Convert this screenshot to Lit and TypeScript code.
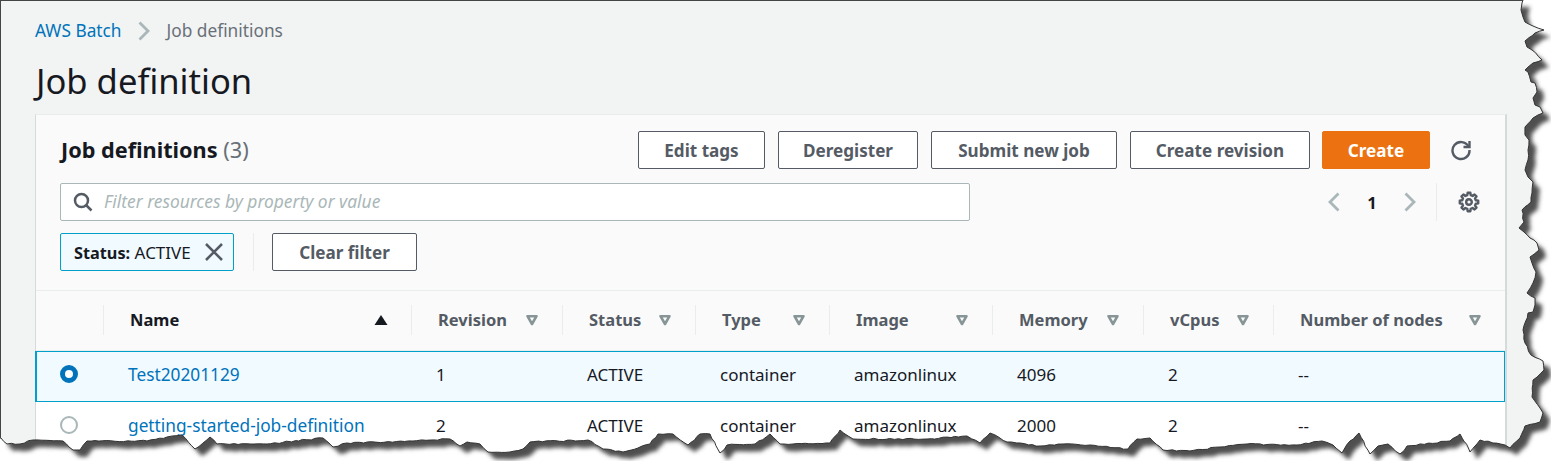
import { LitElement, html, css, svg } from "lit";
import { customElement } from "lit/decorators.js";

const rightEdge: number[][] = [[1523,0],[1522,3],[1521,10],[1523,17],[1525,22],[1533,26],[1544,30],[1535,33],[1525,41],[1527,47],[1532,50],[1542,60],[1533,63],[1525,70],[1528,72],[1531,82],[1535,83],[1537,92],[1533,98],[1535,105],[1540,107],[1543,113],[1533,118],[1525,127],[1525,135],[1529,140],[1528,150],[1528,160],[1525,170],[1528,177],[1533,182],[1532,193],[1531,202],[1522,210],[1524,222],[1519,228],[1524,232],[1530,238],[1537,243],[1539,250],[1530,257],[1532,263],[1536,272],[1533,283],[1527,293],[1535,298],[1535,305],[1533,312],[1528,313],[1523,330],[1525,343],[1531,355],[1543,361],[1544,370],[1533,380],[1532,397],[1540,408],[1543,413],[1540,422],[1525,426],[1520,438],[1510,448]];
const bottomEdge: number[][] = [[1505,445],[1480,440],[1470,452],[1460,434],[1450,441],[1407,446],[1400,454],[1388,444],[1378,446],[1370,454],[1359,433],[1350,441],[1342,453],[1333,445],[1322,441],[1297,445],[1247,444],[1220,447],[1190,451],[1163,450],[1150,438],[1137,439],[1128,449],[1090,445],[1063,444],[1040,446],[1020,443],[1007,442],[990,433],[980,443],[967,436],[927,439],[853,439],[840,430],[830,443],[793,444],[780,444],[770,434],[755,444],[727,445],[720,453],[710,434],[700,434],[688,445],[673,434],[658,434],[650,444],[623,452],[603,449],[588,440],[530,442],[523,449],[510,452],[488,452],[480,444],[467,442],[460,446],[450,439],[413,441],[347,443],[333,447],[323,438],[267,444],[217,444],[210,437],[195,449],[182,435],[167,437],[147,441],[87,441],[80,450],[73,450],[63,441],[33,440],[20,444],[7,444],[1,438]];

// Break the long straight runs of the tear into a small deterministic wobble.
function roughen(points: number[][]) {
  const out: string[] = [];
  let seed = 7;
  const noise = () => {
    seed = (seed * 16807) % 2147483647;
    return (seed % 1000) / 1000 - 0.5;
  };
  points.forEach((p, i) => {
    out.push(`${p[0]} ${p[1]}`);
    const q = points[i + 1];
    if (!q) return;
    const len = Math.hypot(q[0] - p[0], q[1] - p[1]);
    const steps = Math.floor(len / 4);
    for (let s = 1; s < steps; s++) {
      const t = s / steps;
      const x = p[0] + (q[0] - p[0]) * t + noise() * 1.4;
      const y = p[1] + (q[1] - p[1]) * t + noise() * 1.4;
      out.push(`${x.toFixed(1)} ${y.toFixed(1)}`);
    }
  });
  return out;
}
const edgePts = roughen([...rightEdge, ...bottomEdge]);
const edgeD = "M" + edgePts.join("L");
const outsideD = edgeD + "L0 438L0 461L1551 461L1551 0Z";
const pageD = edgeD + "L0 0Z";

function gearPath(cx: number, cy: number, ro: number, ri: number, teeth: number) {
  const pts: string[] = [];
  for (let i = 0; i < teeth; i++) {
    const a = (i / teeth) * Math.PI * 2 - Math.PI / 2;
    const s = Math.PI / teeth;
    const list: [number, number][] = [
      [ri, a - s * 0.62],
      [ro, a - s * 0.38],
      [ro, a + s * 0.38],
      [ri, a + s * 0.62],
    ];
    for (const [r, t] of list) {
      pts.push(`${(cx + r * Math.cos(t)).toFixed(2)} ${(cy + r * Math.sin(t)).toFixed(2)}`);
    }
  }
  return "M" + pts.join("L") + "Z";
}

const chevron = (dir: "l" | "r") => html`<svg class="chev" width="14" height="20" viewBox="0 0 14 20" fill="none" stroke="#aab7b8" stroke-width="2.800"><path d=${dir === "r" ? "M2.500 1.500l8.500 8.500-8.500 8.500" : "M11.500 1.500L3 10l8.500 8.500"}></path></svg>`;

const caret = html`<svg class="caret" width="14" height="12" viewBox="0 0 14 12" fill="none" stroke="#879596" stroke-width="2.600" stroke-linejoin="round"><path d="M2.500 2.200h9L7 10z"></path></svg>`;
const sortUp = html`<svg class="caret" width="14" height="12" viewBox="0 0 14 12"><path d="M7 1l6.500 10H.5z" fill="#16191f"></path></svg>`;

const columns = ["Name", "Revision", "Status", "Type", "Image", "Memory", "vCpus", "Number of nodes"];
const rows = [
  { selected: true, cells: ["Test20201129", "1", "ACTIVE", "container", "amazonlinux", "4096", "2", "--"] },
  { selected: false, cells: ["getting-started-job-definition", "2", "ACTIVE", "container", "amazonlinux", "2000", "2", "--"] },
];

@customElement("app-root")
export class AppRoot extends LitElement {
  static styles = css`
    :host {
      display: block;
      position: relative;
      width: 1551px;
      height: 461px;
      overflow: hidden;
      background: #f2f3f3;
      font-family: "Noto Sans", "Open Sans", sans-serif;
      font-size: 17px;
      color: #16191f;
    }
    * { box-sizing: border-box; }
    .page {
      display: flex;
      flex-direction: column;
      padding: 20px 44px 0 35px;
    }
    .crumbs {
      display: flex;
      align-items: center;
      height: 22px;
      font-size: 17.300px;
      color: #687078;
    }
    .crumbs span, .crumbs a { position: relative; top: -1px; }
    .crumbs a { color: #0073bb; }
    .crumbs .chev { margin: 0 16px 0 15px; }
    h1 {
      margin: 16px 0 10px;
      height: 46px;
      line-height: 46px;
      padding-left: 1px;
      font-size: 34.600px;
      font-weight: 400;
    }
    .panel {
      width: 1472px;
      background: #fafafa;
      border: 1px solid #d5dbdb;
      border-top-color: #eaeded;
      border-right-width: 2px;
    }
    .tools {
      display: flex;
      flex-direction: column;
      padding: 16px 24px 19px;
      border-bottom: 1px solid #eaeded;
    }
    .bar { display: flex; align-items: center; height: 38px; }
    .bar.search { margin-top: 14px; }
    .bar.filter { margin-top: 12px; }
    h2 {
      margin: 0;
      flex: 1;
      padding: 0 0 2px 1px;
      font-size: 21.700px;
      font-weight: 700;
    }
    h2 span { font-weight: 400; color: #687078; }
    .btn {
      display: flex;
      align-items: center;
      justify-content: center;
      height: 38px;
      border: 1px solid #545b64;
      border-radius: 2px;
      background: #fff;
      color: #545b64;
      font-size: 17.100px;
      font-weight: 700;
      margin-left: 13px;
    }
    .btn.w1 { width: 127px; margin-left: 0; }
    .btn.w2 { width: 140px; }
    .btn.w3 { width: 186px; }
    .btn.w4 { width: 180px; }
    .btn.primary {
      width: 108px;
      margin-left: 12px;
      background: #ec7211;
      border-color: #ec7211;
      color: #fff;
    }
    .refresh { margin: 0 9px 0 20px; }
    .input {
      display: flex;
      align-items: center;
      width: 910px;
      height: 38px;
      border: 1px solid #aab7b8;
      border-radius: 2px;
      background: #fff;
      padding: 0 0 2px 12px;
      font-size: 17.400px;
      font-style: italic;
      color: #aab7b8;
    }
    .input svg { margin: 2px 11px 0 0; flex: none; }
    .pager {
      display: flex;
      align-items: center;
      margin-left: auto;
      height: 38px;
    }
    .pager .num { width: 62px; text-align: center; font-weight: 700; font-size: 16.500px; }
    .pager .rule { width: 1px; height: 38px; background: #eaeded; margin: 0 21px 0 19px; }
    .pager .gear { margin-right: 1px; }
    .chip {
      display: flex;
      align-items: center;
      justify-content: space-between;
      width: 174px;
      height: 38px;
      border: 1px solid #00a1c9;
      border-radius: 2px;
      background: #f1faff;
      padding: 0 9px 0 13px;
      white-space: pre;
    }
    .chip b { font-weight: 700; font-size: 16.300px; }
    .chip svg { flex: none; }
    .vrule { width: 1px; height: 38px; background: #eaeded; margin: 0 18px 0 19px; }
    .btn.clear { width: 145px; margin-left: 0; }

    .row {
      display: grid;
      grid-template-columns: 67px 308px 151px 133px 134px 163px 151px 130px 1fr;
    }
    .head {
      height: 60px;
      padding-bottom: 2px;
      align-items: center;
      border-bottom: 1px solid #eaeded;
    }
    .th {
      display: flex;
      align-items: center;
      justify-content: space-between;
      height: 30px;
      padding: 0 23px 0 26px;
      font-weight: 700;
      font-size: 16.500px;
      color: #545b64;
      white-space: nowrap;
    }
    .th.rule { border-left: 1px solid #eaeded; }
    .th.sorted { color: #16191f; }
    .body { background: #fff; }
    .tr { height: 51px; padding-bottom: 5px; align-items: center; }
    .tr.selected {
      background: #f1faff;
      box-shadow: inset 0 0 0 1px #00a1c9, -1px 0 0 #00a1c9;
    }
    .td { padding-left: 25px; white-space: nowrap; }
    .td a { color: #0073bb; font-size: 17.300px; }
    .radio {
      display: block;
      width: 18px;
      height: 18px;
      margin: 0 0 0 24px;
      border-radius: 50%;
      border: 2px solid #aab7b8;
      background: #fff;
    }
    .radio.on { border: 5px solid #0073bb; }
    .tear { position: absolute; inset: 0; pointer-events: none; }
  `;

  render() {
    return html`
      <div class="page">
        <nav class="crumbs"><a>AWS Batch</a>${chevron("r")}<span>Job definitions</span></nav>
        <h1>Job definition</h1>
        <section class="panel">
          <div class="tools">
            <div class="bar">
              <h2>Job definitions <span>(3)</span></h2>
              <div class="btn w1">Edit tags</div>
              <div class="btn w2">Deregister</div>
              <div class="btn w3">Submit new job</div>
              <div class="btn w4">Create revision</div>
              <div class="btn primary">Create</div>
              <svg class="refresh" width="22" height="22" viewBox="0 0 22 22" fill="none" stroke="#545b64" stroke-width="2.400">
                <path d="M18.500 7.500A8.500 8.500 0 1 0 19.500 11"></path>
                <path d="M19.500 2v6h-6" stroke-linejoin="miter"></path>
              </svg>
            </div>
            <div class="bar search">
              <div class="input">
                <svg width="20" height="20" viewBox="0 0 20 20" fill="none" stroke="#545b64" stroke-width="2.500">
                  <circle cx="8.500" cy="8.500" r="6.500"></circle>
                  <path d="M13 13l5.500 5.500"></path>
                </svg>
                <span>Filter resources by property or value</span>
              </div>
              <div class="pager">
                ${chevron("l")}
                <span class="num">1</span>
                ${chevron("r")}
                <span class="rule"></span>
                <svg class="gear" width="22" height="22" viewBox="0 0 22 22" fill="none" stroke="#545b64" stroke-width="2.400" stroke-linejoin="round">
                  <path d=${gearPath(11, 11, 9.300, 7, 8)}></path>
                  <circle cx="11" cy="11" r="2.800"></circle>
                </svg>
              </div>
            </div>
            <div class="bar filter">
              <div class="chip">
                <span><b>Status:</b> ACTIVE</span>
                <svg width="20" height="20" viewBox="0 0 20 20" fill="none" stroke="#545b64" stroke-width="2.500"><path d="M2 2l16 16M18 2L2 18"></path></svg>
              </div>
              <span class="vrule"></span>
              <div class="btn clear">Clear filter</div>
            </div>
          </div>
          <div class="row head">
            <div></div>
            ${columns.map(
              (c, i) => html`<div class="th rule ${i === 0 ? "sorted" : ""}"><span>${c}</span>${i === 0 ? sortUp : caret}</div>`
            )}
          </div>
          <div class="body">
            ${rows.map(
              (r) => html`<div class="row tr ${r.selected ? "selected" : ""}">
                <span class="radio ${r.selected ? "on" : ""}"></span>
                ${r.cells.map((c, i) => html`<div class="td">${i === 0 ? html`<a>${c}</a>` : c}</div>`)}
              </div>`
            )}
          </div>
        </section>
      </div>
      <svg class="tear" width="1551" height="461" viewBox="0 0 1551 461" fill="none">
        <defs>
          <clipPath id="out"><path d=${outsideD}></path></clipPath>
          <filter id="soft" x="-5%" y="-5%" width="110%" height="110%"><feGaussianBlur stdDeviation="2"></feGaussianBlur></filter>
        </defs>
        <path d=${outsideD} fill="#fff"></path>
        <g clip-path="url(#out)">
          ${svg`<path d=${pageD} transform="translate(7 7)" fill="#4f4f4f" filter="url(#soft)"></path>`}
        </g>
        <path d=${edgeD + "L0 438"} stroke="#333" stroke-width="1"></path>
        <path d="M0 .5H1523M.5 0V438" stroke="#444" stroke-width="1"></path>
      </svg>
    `;
  }
}
